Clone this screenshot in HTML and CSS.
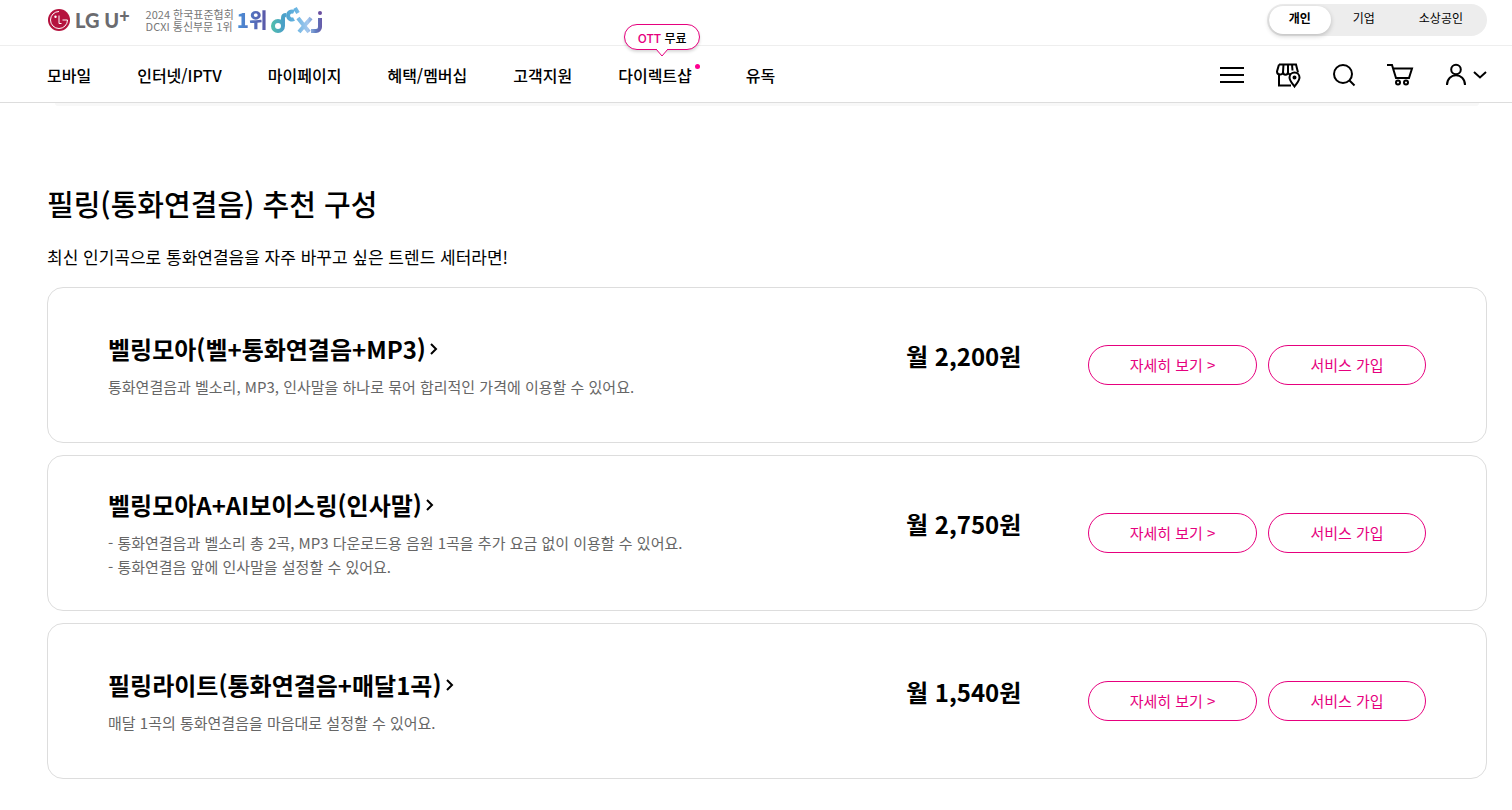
FILE: index.html
```html
<!doctype html>
<html lang="ko">
<head>
	<meta charset="UTF-8">
	<meta name="viewport" content="width=device-width, initial-scale=1">
	<title>필링(통화연결음) | LG U+</title>
	<link rel="stylesheet" href="styles.css">
</head>
<body>
	<header class="header">
		<div class="top">
			<a href="#" class="logo">
				<svg width="22" height="22" viewBox="0 0 22 22" aria-hidden="true">
					<circle cx="11" cy="11" r="11" fill="#b5123e"/>
					<path d="M11 2.500a8.500 8.500 0 1 0 8.500 8.500h-5" fill="none" stroke="#fff" stroke-width="1"/>
					<path d="M11 6.500v8h2.500" fill="none" stroke="#fff" stroke-width="1"/>
					<circle cx="7.500" cy="7.800" r="1.200" fill="#fff"/>
				</svg>
				<span class="logo-name">LG U<sup>+</sup></span>
			</a>
			<a href="#" class="award">
				<span class="award-text">2024 한국표준협회<br>DCXI 통신부문 1위</span>
				<strong class="award-rank">1위</strong>
				<svg width="54" height="30" viewBox="0 0 54 30" role="img" aria-label="dcxi">
					<defs>
						<linearGradient id="dcxi" gradientUnits="userSpaceOnUse" x1="0" y1="0" x2="54" y2="0">
							<stop offset="0" stop-color="#52c3a8"/>
							<stop offset=".25" stop-color="#4a9fc8"/>
							<stop offset=".45" stop-color="#62b2e0"/>
							<stop offset=".7" stop-color="#a5c8ee"/>
							<stop offset=".85" stop-color="#5f7cc0"/>
							<stop offset="1" stop-color="#6a4fa0"/>
						</linearGradient>
					</defs>
					<g fill="none" stroke="url(#dcxi)" stroke-width="4">
						<circle cx="8" cy="21" r="5"/>
						<path d="M13 21V13q0-3 3-3"/>
						<path d="M24 7a4 4 0 1 0 0 7"/>
						<path d="M25 3l3 5M28 13l11 14M41 13L29 27"/>
						<path d="M50 13v9a4 4 0 0 1-4 4h-5"/>
					</g>
					<circle cx="50" cy="8" r="2" fill="#6a4fa0"/>
				</svg>
			</a>
			<div class="segment">
				<button type="button" class="on">개인</button>
				<button type="button">기업</button>
				<button type="button">소상공인</button>
			</div>
		</div>
		<div class="gnb">
			<nav class="menu">
				<a href="#">모바일</a>
				<a href="#">인터넷/IPTV</a>
				<a href="#">마이페이지</a>
				<a href="#">혜택/멤버십</a>
				<a href="#">고객지원</a>
				<a href="#" class="new">다이렉트샵
					<span class="bubble"><em>OTT</em> 무료<svg width="12" height="9" viewBox="0 0 12 9" aria-hidden="true"><path d="M0 0L6 7L12 0" fill="#fff" stroke="#e6007e"/></svg></span>
				</a>
				<a href="#">유독</a>
			</nav>
			<div class="tools">
				<button type="button" aria-label="전체메뉴">
					<svg width="28" height="28" viewBox="0 0 28 28"><path d="M2 7h24M2 14h24M2 21h24"/></svg>
				</button>
				<button type="button" aria-label="매장찾기">
					<svg width="28" height="28" viewBox="0 0 28 28"><path d="M5 3.500h17l2 8M5 3.500L3 10.500c0 4 6 4 6 .5c0 3.500 5 3.500 5 0c0 2 1.500 2.500 3 2.300M9.500 3.500L9 11M18 3.500l.5 6M14 3.500V11M5 14v10.500h12"/><path d="M20.500 25.500c-3-4-5-6-5-9a5 5 0 0 1 10 0c0 3-2 5-5 9z"/><circle cx="20.500" cy="16.500" r="1"/></svg>
				</button>
				<button type="button" aria-label="검색">
					<svg width="28" height="28" viewBox="0 0 28 28"><circle cx="13" cy="13" r="9"/><path d="M19.500 19.500l5 5"/></svg>
				</button>
				<button type="button" aria-label="장바구니">
					<svg width="28" height="28" viewBox="0 0 28 28"><path d="M1 4h5l4 13h13l3-9.500H7"/><circle cx="12" cy="21.500" r="2"/><circle cx="20" cy="21.500" r="2"/></svg>
				</button>
				<button type="button" class="my" aria-label="마이메뉴">
					<svg width="28" height="28" viewBox="0 0 28 28"><circle cx="14" cy="8.500" r="4.800"/><path d="M5 24c0-13 18-13 18 0"/></svg>
					<svg width="14" height="28" viewBox="0 0 14 28"><path d="M1 11l6 5.500l6-5.500"/></svg>
				</button>
			</div>
		</div>
	</header>

	<main class="content">
		<div class="panel-end"></div>
		<h1>필링(통화연결음) 추천 구성</h1>
		<p class="lead">최신 인기곡으로 통화연결음을 자주 바꾸고 싶은 트렌드 세터라면!</p>
		<ul class="plans">
			<li class="plan">
				<div class="info">
					<h2><a href="#">벨링모아(벨+통화연결음+MP3)<svg width="8" height="14" viewBox="0 0 8 14" aria-hidden="true"><path d="M1 2l5 5l-5 5"/></svg></a></h2>
					<p>통화연결음과 벨소리, MP3, 인사말을 하나로 묶어 합리적인 가격에 이용할 수 있어요.</p>
				</div>
				<strong class="price">월 2,200원</strong>
				<div class="btns">
					<button type="button" class="btn-detail">자세히 보기 &gt;</button>
					<button type="button" class="btn-join">서비스 가입</button>
				</div>
			</li>
			<li class="plan">
				<div class="info">
					<h2><a href="#">벨링모아A+AI보이스링(인사말)<svg width="8" height="14" viewBox="0 0 8 14" aria-hidden="true"><path d="M1 2l5 5l-5 5"/></svg></a></h2>
					<p>- 통화연결음과 벨소리 총 2곡, MP3 다운로드용 음원 1곡을 추가 요금 없이 이용할 수 있어요.<br>- 통화연결음 앞에 인사말을 설정할 수 있어요.</p>
				</div>
				<strong class="price">월 2,750원</strong>
				<div class="btns">
					<button type="button" class="btn-detail">자세히 보기 &gt;</button>
					<button type="button" class="btn-join">서비스 가입</button>
				</div>
			</li>
			<li class="plan">
				<div class="info">
					<h2><a href="#">필링라이트(통화연결음+매달1곡)<svg width="8" height="14" viewBox="0 0 8 14" aria-hidden="true"><path d="M1 2l5 5l-5 5"/></svg></a></h2>
					<p>매달 1곡의 통화연결음을 마음대로 설정할 수 있어요.</p>
				</div>
				<strong class="price">월 1,540원</strong>
				<div class="btns">
					<button type="button" class="btn-detail">자세히 보기 &gt;</button>
					<button type="button" class="btn-join">서비스 가입</button>
				</div>
			</li>
		</ul>
	</main>
</body>
</html>
```
FILE: styles.css
```css
* {
	box-sizing: border-box;
	margin: 0;
	padding: 0;
}
body {
	font-family: "Noto Sans CJK KR", sans-serif;
	font-size: 16px;
	color: #000;
	background: #fff;
}
a {
	color: inherit;
	text-decoration: none;
}
ul {
	list-style: none;
}
button {
	font: inherit;
	color: inherit;
	border: 0;
	background: none;
	cursor: pointer;
}
svg {
	display: block;
}

/* header */
.header {
	border-bottom: 1px solid #ddd;
}
.top {
	display: flex;
	align-items: center;
	height: 46px;
	padding: 0 25px 5px 48px;
	border-bottom: 1px solid #eee;
}
.logo {
	display: flex;
	align-items: center;
	gap: 5px;
}
.logo-name {
	font-family: Lato, sans-serif;
	font-size: 20px;
	font-weight: 900;
	line-height: 22px;
	color: #6b6b6f;
}
.logo-name sup {
	font-size: 18px;
	line-height: 0;
	vertical-align: 5px;
}
.award {
	display: flex;
	align-items: center;
	gap: 3px;
	margin-left: 16px;
}
.award-text {
	font-size: 11px;
	line-height: 12px;
	color: #777;
}
.award-rank {
	font-size: 20px;
	line-height: 24px;
	font-weight: 900;
	color: transparent;
	background: linear-gradient(90deg, #4a90d9, #5b55a5);
	-webkit-background-clip: text;
	background-clip: text;
}
.segment {
	display: flex;
	height: 32px;
	margin-left: auto;
	padding: 2px;
	border-radius: 16px;
	background: #ededed;
}
.segment button {
	height: 28px;
	padding: 0 22px 4px;
	border-radius: 14px;
	font-size: 12px;
	line-height: 24px;
}
.segment .on {
	padding: 0 20px 4px;
	font-weight: 700;
	background: #fff;
	box-shadow: 0 2px 5px rgba(0, 0, 0, .2);
}
.gnb {
	display: flex;
	align-items: center;
	justify-content: space-between;
	height: 56px;
	padding: 2px 25px 0 47px;
}
.menu {
	display: flex;
	gap: 46px;
	font-size: 16px;
	line-height: 24px;
	font-weight: 500;
}
.menu a {
	position: relative;
}
.menu .new {
	padding-right: 8px;
}
.new::after {
	content: "";
	position: absolute;
	top: 1px;
	right: 0;
	width: 5px;
	height: 5px;
	border-radius: 50%;
	background: #ff0090;
}
.bubble {
	position: absolute;
	left: 6px;
	bottom: 37px;
	width: 76px;
	height: 26px;
	border: 1px solid #e6007e;
	border-radius: 13px;
	background: #fff;
	box-shadow: 0 2px 3px rgba(0, 0, 0, .15);
	font-size: 12px;
	line-height: 25px;
	text-align: center;
}
.bubble em {
	font-style: normal;
	color: #e6007e;
}
.bubble svg {
	position: absolute;
	left: 31px;
	top: 24px;
}
.tools {
	display: flex;
	gap: 28px;
}
.tools svg {
	fill: none;
	stroke: #000;
	stroke-width: 2;
}
.my {
	display: flex;
	gap: 3px;
}

/* content */
.content {
	padding: 0 25px 0 47px;
}
.panel-end {
	height: 3px;
	margin: 0 8px;
	border-radius: 0 0 8px 8px;
	background: #f8f8f8;
}
h1 {
	margin-top: 75px;
	font-size: 29px;
	line-height: 44px;
	font-weight: 500;
}
.lead {
	margin-top: 19px;
	font-size: 17px;
	line-height: 26px;
}
.plans {
	display: grid;
	gap: 12px;
	margin-top: 17px;
	padding-bottom: 32px;
}
.plan {
	display: flex;
	align-items: center;
	min-height: 156px;
	padding: 0 60px;
	border: 1px solid #ddd;
	border-radius: 16px;
}
.info {
	flex: 1;
}
.info h2 {
	font-size: 24px;
	line-height: 36px;
	font-weight: 700;
}
.info h2 a {
	display: inline-flex;
	align-items: center;
	gap: 4px;
}
.info svg {
	fill: none;
	stroke: #000;
	stroke-width: 2;
}
.info p {
	margin-top: 8px;
	font-size: 15px;
	line-height: 24px;
	color: #666;
}
.price {
	width: 182px;
	margin-bottom: 18px;
	font-size: 24px;
	line-height: 36px;
}
.btns {
	display: flex;
	gap: 11px;
	font-size: 15px;
	color: #e6007e;
}
.btns button {
	height: 40px;
	padding-bottom: 2px;
	border: 1px solid #e6007e;
	border-radius: 20px;
}
.btn-detail {
	width: 169px;
}
.btn-join {
	width: 158px;
}
```
